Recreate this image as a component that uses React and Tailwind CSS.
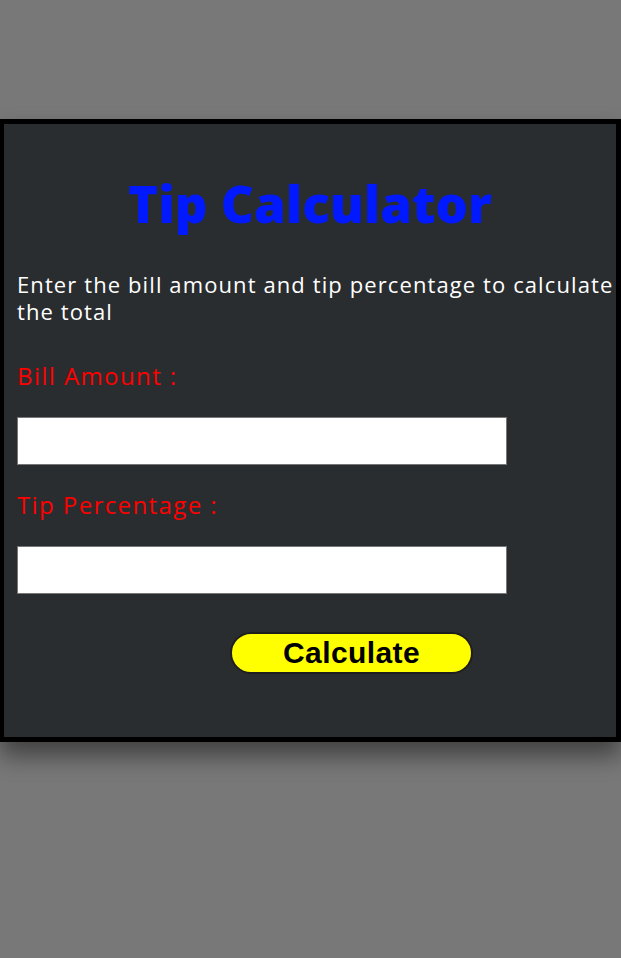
import { useState } from 'react';

function Field({ label, value, onChange, first }) {
  return (
    <>
      <label
        className={
          'block text-[24px] leading-[30px] tracking-[1.4px] text-[#ff0000] ' +
          (first ? 'mt-[36px]' : 'mt-[25px]')
        }
      >
        {label}
      </label>
      <input
        type="number"
        value={value}
        onChange={e => onChange(e.target.value)}
        className="block mt-[26px] w-[490px] h-[48px] bg-white border border-[#767676] px-2 text-[18px] text-black outline-none"
      />
    </>
  );
}

export default function App() {
  const [bill, setBill] = useState('');
  const [tip, setTip] = useState('');
  const [total, setTotal] = useState(null);

  function calculate() {
    const b = Number(bill) || 0;
    const t = Number(tip) || 0;
    setTotal((b + (b * t) / 100).toFixed(2));
  }

  return (
    <div className="min-h-screen bg-[#787878] pt-[119px] font-['Open_Sans',sans-serif]">
      <div className="border-[5px] border-l-4 border-black bg-[#2a2d2f] pl-[13px] pt-[47px] pb-[63px] shadow-[0_14px_22px_rgba(0,0,0,0.45)]">
        <h1 className="-ml-[13px] h-[64px] text-center text-[51px] leading-[64px] font-extrabold text-[#0019ff]">
          Tip Calculator
        </h1>
        {/* wrap lands after "calculate" like the original */}
        <p className="mt-[36px] -mr-[12px] text-[22px] leading-[27px] tracking-[1.1px] text-white">
          Enter the bill amount and tip percentage to calculate<br />the total
        </p>
        <Field first label="Bill Amount :" value={bill} onChange={setBill} />
        <Field label="Tip Percentage :" value={tip} onChange={setTip} />
        <button
          onClick={calculate}
          className="block mt-[38px] ml-[213px] w-[243px] h-[42px] rounded-[21px] border-2 border-[#1e1e1e] bg-[#ffff00] font-['Liberation_Sans',Arial,sans-serif] text-[30px] leading-none font-bold tracking-[0.4px] text-black"
        >
          Calculate
        </button>
        {total !== null && (
          <p className="mt-4 text-[22px] text-white">Total : {total}</p>
        )}
      </div>
    </div>
  );
}
